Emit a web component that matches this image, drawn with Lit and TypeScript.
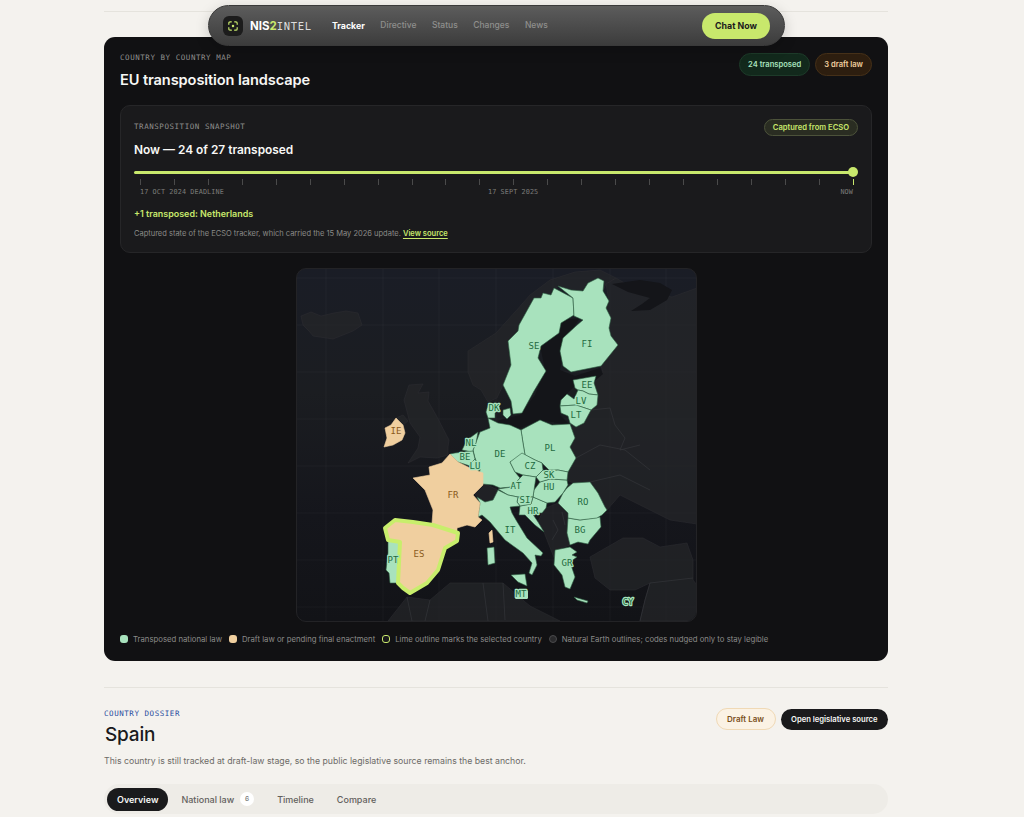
import { LitElement, html, css, svg } from "lit";
import { customElement } from "lit/decorators.js";

type C = { p: string; k: "g" | "o"; };
const countries: C[] = [
  { k: "g", p: "554,288 573,298 574,315 561,323 559,333 541,346 538,358 546,371 534,391 522,413 513,414 511,401 503,385 511,365 508,341 518,331 519,325 534,298 541,298 543,293 551,295" },
  { k: "g", p: "558,286 573,298 574,316 583,320 576,326 563,338 560,351 563,366 571,372 601,366 618,345 611,336 609,328 611,318 606,308 609,301 603,291 604,281 598,278 588,283 583,291 571,290" },
  { k: "g", p: "573,380 596,376 594,383 598,395 589,394 583,391 578,390 575,388" },
  { k: "g", p: "583,391 589,394 598,395 597,405 591,410 576,405 560,406 561,400 567,394 574,399 578,390" },
  { k: "g", p: "560,406 576,405 591,410 584,423 576,427 570,423 568,416 561,413" },
  { k: "g", p: "521,430 540,420 552,425 570,424 575,438 570,447 576,458 568,472 558,470 549,470 542,463 535,460 525,455 523,443" },
  { k: "g", p: "488,418 498,423 510,425 521,430 523,443 525,455 510,462 515,472 520,478 512,487 500,488 493,485 483,484 478,480 480,470 475,458 473,450 480,432 490,428" },
  { k: "g", p: "488,405 497,403 500,408 495,413 495,418 488,418 486,412" },
  { k: "g", p: "503,410 510,408 511,415 507,419 503,415" },
  { k: "g", p: "467,440 478,432 476,443 473,450 473,452 462,450" },
  { k: "g", p: "455,453 473,451 475,459 470,466 458,462 450,454" },
  { k: "g", p: "470,464 475,459 480,470 476,472 470,468" },
  { k: "g", p: "568,518 580,520 600,517 601,527 590,540 588,544 578,542 570,545 567,533" },
  { k: "g", p: "563,493 567,488 573,483 590,482 598,493 605,507 607,510 602,515 597,518 580,520 568,518 568,513 558,503" },
  { k: "g", p: "520,506 531,504 533,497 547,503 546,508 542,513 532,513 538,522 544,532 535,525 525,515 519,515" },
  { k: "g", p: "534,490 540,482 550,479 567,480 568,485 563,493 555,502 547,503 533,497" },
  { k: "g", p: "536,477 543,470 549,471 558,470 568,472 567,480 550,479 540,482" },
  { k: "g", p: "510,462 522,453 535,460 542,463 543,470 536,477 523,475 515,472" },
  { k: "g", p: "498,489 512,487 520,478 523,475 536,477 534,490 533,497 518,497 508,495" },
  { k: "g", p: "518,497 533,497 531,504 520,506 517,502" },
  { k: "g", p: "493,500 498,490 508,495 518,497 517,502 520,506 510,507 512,513 516,520 527,538 543,553 541,556 535,555 537,565 532,575 529,573 532,563 523,553 505,540 490,522 482,515 478,517 480,503 477,497 485,502" },
  { k: "g", p: "487,548 494,547 495,563 488,565" },
  { k: "g", p: "511,575 525,574 527,586 518,582" },
  { k: "g", p: "555,550 570,547 577,552 572,555 577,557 570,562 575,577 570,589 565,587 562,575 554,565" },
  { k: "g", p: "574,597 588,601 587,603 577,600" },
  { k: "g", p: "388,539 401,542 399,583 390,583 389,573 386,570 388,553" },
  { k: "o", p: "450,454 458,462 470,468 483,473 483,485 473,495 480,503 478,517 482,520 475,527 467,525 457,528 457,533 432,523 433,510 425,490 413,478 430,475 429,467 442,463" },
  { k: "o", p: "489,533 492,530 493,542 490,543" },
  { k: "o", p: "396,418 403,425 405,433 402,440 393,445 384,447 387,438 385,428 391,425" },
];

const land = [
  "301,316 311,312 321,316 334,313 346,311 358,313 362,325 353,331 333,339 313,336 309,331 303,325",
  "409,385 423,384 418,393 429,392 428,401 436,415 449,440 448,447 448,455 437,458 420,457 408,463 418,448 420,437 410,423 404,400",
  "396,418 403,415 408,421 403,425",
  "468,351 496,333 515,312 530,295 550,280 575,272 600,270 616,278 606,284 603,291 588,283 583,291 571,290 558,286 551,295 543,293 541,298 534,298 519,325 518,331 508,341 511,365 503,385 497,398 488,402 481,390 473,385 468,372",
  "606,284 616,278 640,292 672,297 697,288 697,524 670,520 640,505 620,495 607,510 598,493 590,482 573,483 567,480 568,472 576,458 570,447 575,438 570,424 584,423 591,410 597,405 598,395 594,383 603,372 601,366 618,345 611,336 609,328 611,318 606,308 609,301",
  "542,513 546,508 558,503 568,513 568,518 567,533 570,545 556,550 555,560 549,545 544,532 538,522",
  "590,557 623,538 643,538 660,547 687,543 693,560 693,580 697,585 697,621 640,621 645,600 650,583 635,590 610,590 595,578",
  "474,492 485,484 498,490 493,500 485,502 477,497",
  "388,621 407,597 430,600 450,583 483,583 503,583 530,606 560,621",
];

const darkSea = [
  "500,420 520,415 535,395 545,370 540,345 560,320 580,318 565,340 560,370 575,376 600,368 603,374 596,380 575,386 560,400 560,415 570,425 540,420 520,428 495,425",
  "631,311 650,310 667,300 672,290 660,283 640,280 612,284 628,292 650,298 642,304",
];

const bordersDim = [
  "M591 410 L610 408 L615 425 L625 438 L620 450 L640 445",
  "M576 458 L600 445 L625 450 L650 470",
  "M568 485 L590 482 L620 475 L650 490",
  "M407 597 L412 621 M430 600 L425 621 M483 583 L488 621 M503 583 L505 620",
  "M650 583 L645 600 L640 621 M650 583 L693 578",
  "M553 520 L558 530 L552 540 M562 512 L565 525",
];

const labels: [string, number, number, "g" | "o"][] = [
  ["SE", 534, 346, "g"], ["FI", 587, 344, "g"], ["EE", 587, 385, "g"], ["LV", 581, 401, "g"], ["LT", 576, 415, "g"],
  ["DK", 494, 408, "g"], ["IE", 396, 431, "o"], ["NL", 471, 443, "g"], ["BE", 465, 457, "g"], ["LU", 475, 466, "g"],
  ["DE", 500, 454, "g"], ["PL", 550, 448, "g"], ["CZ", 530, 466, "g"], ["SK", 549, 475, "g"], ["HU", 549, 487, "g"],
  ["AT", 516, 486, "g"], ["SI", 525, 500, "g"], ["HR", 533, 511, "g"], ["RO", 583, 502, "g"], ["BG", 580, 530, "g"],
  ["GR", 567, 563, "g"], ["IT", 510, 530, "g"], ["FR", 453, 495, "o"], ["ES", 419, 554, "o"], ["PT", 393, 560, "g"],
  ["MT", 521, 594, "g"], ["CY", 628, 602, "g"],
];

const vGrid = [326, 383, 439, 496, 553, 610, 666];
const hGrid = [278, 325, 372, 419, 466, 513, 560, 607];

@customElement("app-root")
export class AppRoot extends LitElement {
  static styles = css`
    :host { display: block; position: relative; height: 817px; overflow: hidden; background: #f4f2ee; font-family: Inter, "Liberation Sans", sans-serif; color: #1a1a1c; }
    * { box-sizing: border-box; }
    .mono { font-family: "DejaVu Sans Mono", "Liberation Mono", monospace; }
    .page { width: 784px; margin: 0 0 0 104px; padding-top: 11px; }
    .rule { height: 1px; background: #e5e3dd; }
    .card { margin-top: 25px; height: 624px; background: #111113; border-radius: 11px; padding: 16px; display: flex; flex-direction: column; }
    .card-head { display: flex; justify-content: space-between; align-items: flex-start; height: 52px; }
    .eyebrow { font-size: 7.5px; letter-spacing: .55px; color: #8f8f8d; line-height: 10px; }
    h1 { margin: 7px 0 0; font-size: 14.6px; font-weight: 600; line-height: 20px; color: #f7f7f5; letter-spacing: -.1px; }
    .badges { display: flex; gap: 5px; }
    .badge { height: 23px; border-radius: 12px; padding: 0 8px; display: flex; align-items: center; font-size: 7.6px; font-weight: 600; border: 1px solid; }
    .b-green { background: #12291c; border-color: #1d3a29; color: #a8e2bd; }
    .b-orange { background: #2d1e0f; border-color: #453018; color: #f0cf9f; }
    .panel { height: 149px; background: #1a1a1c; border: 1px solid #262628; border-radius: 10px; padding: 13px 13px 0; display: flex; flex-direction: column; }
    .panel-head { display: flex; justify-content: space-between; align-items: center; height: 17px; }
    .captured { height: 17px; padding: 0 8px; border-radius: 9px; background: #2a2d22; border: 1px solid #4c523a; color: #c8e86c; font-size: 7.6px; font-weight: 600; display: flex; align-items: center; }
    h2 { margin: 6px 0 0; font-size: 11.9px; line-height: 16px; font-weight: 600; color: #f7f7f5; }
    .track { position: relative; margin-top: 13px; height: 3px; width: 719px; background: #c8e86c; border-radius: 2px; }
    .knob { position: absolute; right: -5px; top: -3.5px; width: 10px; height: 10px; border-radius: 50%; background: #c8e86c; }
    .ticks { display: flex; justify-content: space-between; margin: 5px 0 0 6px; width: 714px; height: 6px; }
    .tick { width: 1px; background: #4a4a4a; }
    .tick:last-child { background: #c8e86c; }
    .scale { display: grid; grid-template-columns: 348px 1fr auto; margin: 2px 0 0 6px; width: 713px; font-size: 6.8px; color: #7c7c7a; line-height: 10px; letter-spacing: .1px; }
    .delta { margin-top: 11.5px; font-size: 8.95px; line-height: 12px; font-weight: 600; color: #c8e86c; }
    .note { margin-top: 7.5px; font-size: 7.5px; line-height: 12px; color: #8b8b88; }
    .note a { color: #c8e86c; font-weight: 600; font-size: 7.5px; text-decoration: underline; text-underline-offset: 1.5px; }
    .map-frame { margin: 15px auto 0; width: 401px; height: 354px; border-radius: 10px; overflow: hidden; border: 1px solid #232326; background: linear-gradient(180deg, #1a1d26 0%, #1b1d21 35%, #15161c 70%, #121317 100%); flex: none; }
    .map-frame svg { display: block; width: 399px; height: 352px; }
    .lbl { font-family: "DejaVu Sans Mono", "Liberation Mono", monospace; font-size: 9px; font-weight: 500; text-anchor: middle; dominant-baseline: central; paint-order: stroke; stroke-width: 2.4px; stroke-linejoin: round; }
    .lbl-g { fill: #1f6b3f; stroke: #a8e2bd; }
    .lbl-o { fill: #8a5a20; stroke: #f0cf9f; }
    .legend { margin-top: 11px; display: flex; align-items: center; font-size: 7.75px; color: #8c8c8a; height: 12px; }
    .leg { display: flex; align-items: center; gap: 5px; margin-right: 7px; }
    .dot { width: 8px; height: 8px; border-radius: 3px; flex: none; }
    .d-g { background: #a8e2bd; }
    .d-o { background: #f0cf9f; }
    .d-l { border: 1px solid #c8e86c; background: #1a1a1c; }
    .d-n { border: 1px solid #4a4a4c; background: #2a2a2c; border-radius: 50%; }
    .rule2 { margin-top: 26px; }
    .dossier { margin-top: 21px; display: flex; justify-content: space-between; align-items: flex-start; height: 45px; }
    .blue { font-size: 7.5px; letter-spacing: .55px; color: #2a4da0; line-height: 10px; }
    .spain { margin: 3px 0 0 1px; font-size: 19px; line-height: 26px; font-weight: 500; letter-spacing: -.2px; }
    .actions { display: flex; gap: 5px; align-items: center; margin-top: -1px; }
    .draft { height: 22px; padding: 0 10.5px; border-radius: 11px; background: #fbf2e4; border: 1px solid #f0d9b5; color: #7a4f20; font-size: 8px; font-weight: 600; display: flex; align-items: center; }
    .open { height: 21px; padding: 0 10.5px; border-radius: 11px; background: #1a1a1c; color: #f7f7f5; font-size: 7.65px; font-weight: 600; display: flex; align-items: center; }
    .desc { font-size: 8.72px; color: #6d6b67; line-height: 12px; margin-top: 1px; }
    .tabs { margin-top: 17px; height: 30px; border-radius: 15px; background: #eeece7; display: flex; align-items: center; padding-left: 3px; font-size: 9px; font-weight: 500; color: #62605c; }
    .tab { padding: 0 11.5px; display: flex; align-items: center; height: 23px; gap: 6px; }
    .tab.on { background: #1a1a1c; color: #f7f7f5; border-radius: 12px; height: 23px; padding: 0 10px; font-weight: 600; margin-right: 1.5px; }
    .count { width: 14px; height: 14px; border-radius: 50%; background: #fff; font-size: 6.5px; display: flex; align-items: center; justify-content: center; color: #777; }
    .nav { position: absolute; left: 208px; top: 5px; width: 577px; height: 41px; border-radius: 21px; background: linear-gradient(180deg, #5c5c5c 0%, #3c3c3c 100%); border: 1px solid #3a3a3a; display: flex; align-items: center; padding: 0 14px 0 14px; box-shadow: 0 4px 14px rgba(0,0,0,.18); }
    .logo { width: 20px; height: 20px; border-radius: 6px; background: #1c1c1c; display: flex; align-items: center; justify-content: center; flex: none; }
    .brand { margin-left: 7px; font-size: 11.5px; width: 82px; color: #e8e8e6; display: flex; align-items: baseline; }
    .brand b { font-weight: 700; color: #fff; }
    .brand i { font-style: normal; font-weight: 700; color: #c8e86c; }
    .brand .mono { font-size: 10.5px; font-weight: 300; letter-spacing: .7px; color: #ddd; }
    .links { display: flex; font-size: 8.5px; color: #8f8f8d; gap: 15.5px; font-weight: 500; }
    .links .on { color: #fff; font-weight: 700; font-size: 8.8px; }
    .chat { margin-left: auto; height: 26px; width: 68px; border-radius: 13px; background: #c8e86c; color: #1a1a1c; font-size: 8.8px; font-weight: 700; display: flex; align-items: center; justify-content: center; }
  `;

  private map() {
    return svg`
      <svg viewBox="297 269 399 352" xmlns="http://www.w3.org/2000/svg">
        ${vGrid.map((x) => svg`<line x1=${x} x2=${x} y1="269" y2="621" stroke="#ffffff" stroke-opacity=".035"></line>`)}
        ${hGrid.map((y) => svg`<line y1=${y} y2=${y} x1="297" x2="696" stroke="#ffffff" stroke-opacity=".035"></line>`)}
        ${land.map((p) => svg`<polygon points=${p} fill="#25262a" fill-opacity=".7" stroke="#2b2c30" stroke-width=".6"></polygon>`)}
        ${darkSea.map((p) => svg`<polygon points=${p} fill="#141519"></polygon>`)}
        ${bordersDim.map((d) => svg`<path d=${d} fill="none" stroke="#34353a" stroke-width=".7"></path>`)}
        <rect x="515" y="590" width="13" height="9" rx="1.5" fill="#a8e2bd"></rect>
        ${countries.map((c) => svg`<polygon points=${c.p} fill=${c.k === "g" ? "#a8e2bd" : "#f0cf9f"} stroke=${c.k === "g" ? "#2f5f43" : "#f0cf9f"} stroke-width=".6" stroke-linejoin="round"></polygon>`)}
        <polygon points="385,528 395,520 413,522 433,525 458,533 457,541 445,548 438,570 427,583 410,593 403,588 398,583 400,542 388,540" fill="#f0cf9f" stroke="#c8ee6c" stroke-width="4" stroke-linejoin="round"></polygon>
        ${labels.map(([t, x, y, k]) => svg`<text class="lbl ${k === "g" ? "lbl-g" : "lbl-o"}" x=${x} y=${y}>${t}</text>`)}
      </svg>`;
  }

  render() {
    return html`
      <div class="page">
        <div class="rule"></div>
        <section class="card">
          <div class="card-head">
            <div>
              <div class="eyebrow mono">COUNTRY BY COUNTRY MAP</div>
              <h1>EU transposition landscape</h1>
            </div>
            <div class="badges">
              <div class="badge b-green">24 transposed</div>
              <div class="badge b-orange">3 draft law</div>
            </div>
          </div>
          <div class="panel">
            <div class="panel-head">
              <div class="eyebrow mono">TRANSPOSITION SNAPSHOT</div>
              <div class="captured">Captured from ECSO</div>
            </div>
            <h2>Now — 24 of 27 transposed</h2>
            <div class="track"><div class="knob"></div></div>
            <div class="ticks">${Array.from({ length: 22 }, () => html`<span class="tick"></span>`)}</div>
            <div class="scale mono"><span>17 OCT 2024 DEADLINE</span><span>17 SEPT 2025</span><span>NOW</span></div>
            <div class="delta">+1 transposed: Netherlands</div>
            <div class="note">Captured state of the ECSO tracker, which carried the 15 May 2026 update. <a>View source</a></div>
          </div>
          <div class="map-frame">${this.map()}</div>
          <div class="legend">
            <div class="leg"><span class="dot d-g"></span>Transposed national law</div>
            <div class="leg"><span class="dot d-o"></span>Draft law or pending final enactment</div>
            <div class="leg"><span class="dot d-l"></span>Lime outline marks the selected country</div>
            <div class="leg"><span class="dot d-n"></span>Natural Earth outlines; codes nudged only to stay legible</div>
          </div>
        </section>
        <div class="rule rule2"></div>
        <section class="dossier">
          <div>
            <div class="blue mono">COUNTRY DOSSIER</div>
            <div class="spain">Spain</div>
          </div>
          <div class="actions">
            <div class="draft">Draft Law</div>
            <div class="open">Open legislative source</div>
          </div>
        </section>
        <div class="desc">This country is still tracked at draft-law stage, so the public legislative source remains the best anchor.</div>
        <div class="tabs">
          <div class="tab on">Overview</div>
          <div class="tab">National law <span class="count">6</span></div>
          <div class="tab">Timeline</div>
          <div class="tab">Compare</div>
        </div>
      </div>
      <nav class="nav">
        <div class="logo">
          <svg width="10" height="10" viewBox="0 0 12 12" fill="none" stroke="#c8e86c" stroke-width="1.4" stroke-linecap="round">
            <path d="M1 4V2.5Q1 1 2.5 1H4M8 1H9.5Q11 1 11 2.5V4M11 8V9.5Q11 11 9.5 11H8M4 11H2.5Q1 11 1 9.5V8"></path>
            <circle cx="6" cy="6" r="1.5" fill="#c8e86c" stroke="none"></circle>
          </svg>
        </div>
        <div class="brand"><b>NIS</b><i>2</i><span class="mono">INTEL</span></div>
        <div class="links"><span class="on">Tracker</span><span>Directive</span><span>Status</span><span>Changes</span><span>News</span></div>
        <div class="chat">Chat Now</div>
      </nav>`;
  }
}
